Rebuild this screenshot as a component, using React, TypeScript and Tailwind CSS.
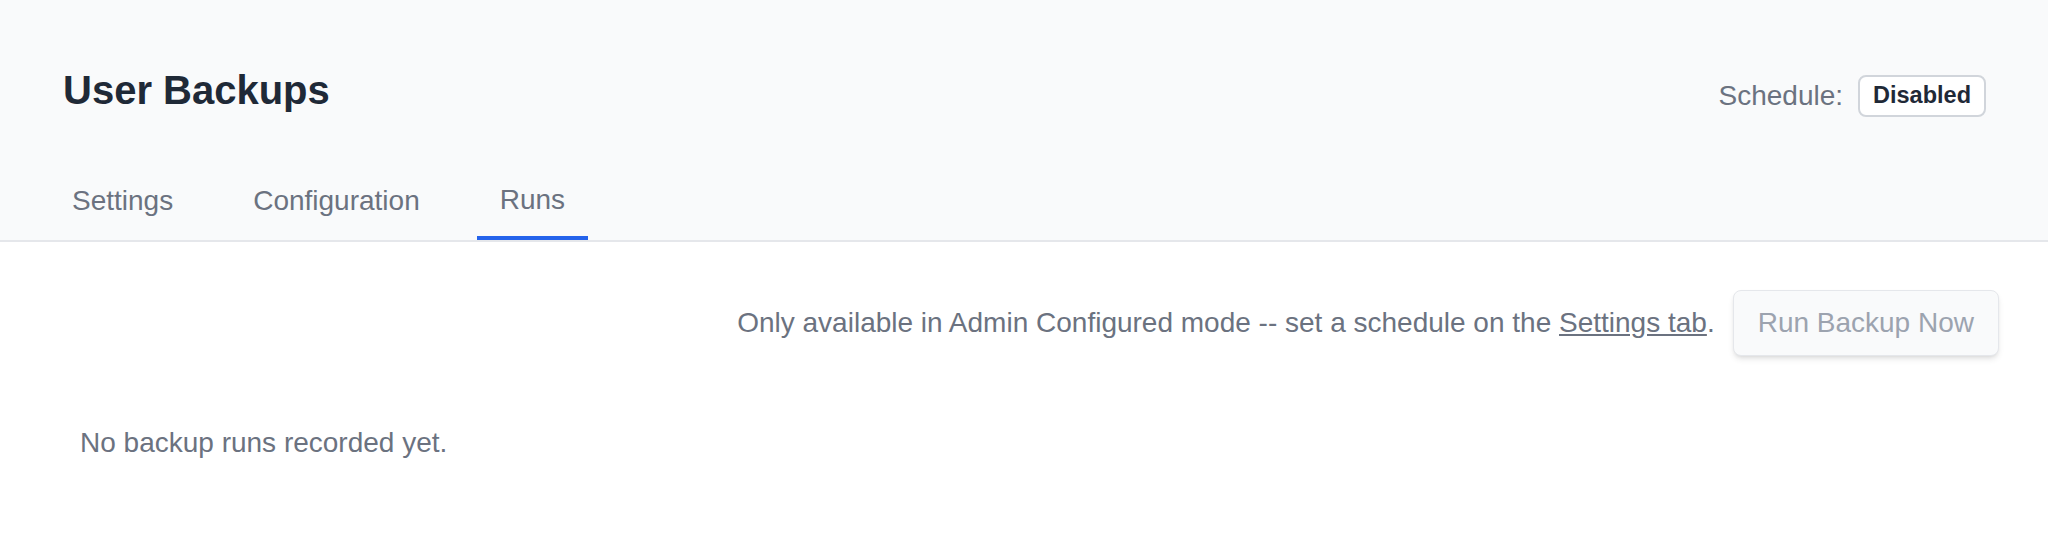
const tabs = ["Settings", "Configuration", "Runs"];

export default function App() {
  const active = "Runs";

  return (
    <div className="min-h-[556px] bg-white font-['Liberation_Sans',Arial,sans-serif] text-[#6b7280]">
      <header className="bg-[#f9fafb] border-b-2 border-[#e5e7eb]">
        <div className="flex justify-between items-start pt-[66px] pl-[63px] pr-[62px]">
          <h1 className="text-[40px] leading-[48px] font-bold text-[#1f2937]">
            User Backups
          </h1>
          <div className="flex items-center gap-[15px] mt-[9px]">
            <span className="text-[28px] leading-[42px]">Schedule:</span>
            <span className="h-[42px] flex items-center px-[13px] rounded-[8px] border-2 border-[#d1d5db] bg-white text-[23.5px] font-bold text-[#1f2937]">
              Disabled
            </span>
          </div>
        </div>

        <nav className="flex gap-[34px] pl-[49px] mt-[50px]">
          {tabs.map((tab) => (
            <button
              key={tab}
              className={`px-[23px] pt-[12px] pb-[15px] text-[28px] leading-[42px] text-[#6b7280] ${
                tab === active
                  ? "border-b-4 border-[#2563eb]"
                  : "border-b-2 border-transparent"
              }`}
            >
              {tab}
            </button>
          ))}
        </nav>
      </header>

      <main className="pl-[80px] pr-[49px]">
        <div className="flex justify-end items-center gap-[18px] mt-[48px]">
          <p className="text-[28px] leading-[42px]">
            Only available in Admin Configured mode -- set a schedule on the{" "}
            <a href="#" className="underline text-[#6b7280]">
              Settings tab
            </a>
            .
          </p>
          <button
            disabled
            className="h-[66px] px-[24px] rounded-[8px] border border-[#e5e7eb] bg-[#f9fafb] shadow-md text-[28px] text-[#9ca3af]"
          >
            Run Backup Now
          </button>
        </div>

        <p className="mt-[66px] text-[28px] leading-[42px]">
          No backup runs recorded yet.
        </p>
      </main>
    </div>
  );
}
